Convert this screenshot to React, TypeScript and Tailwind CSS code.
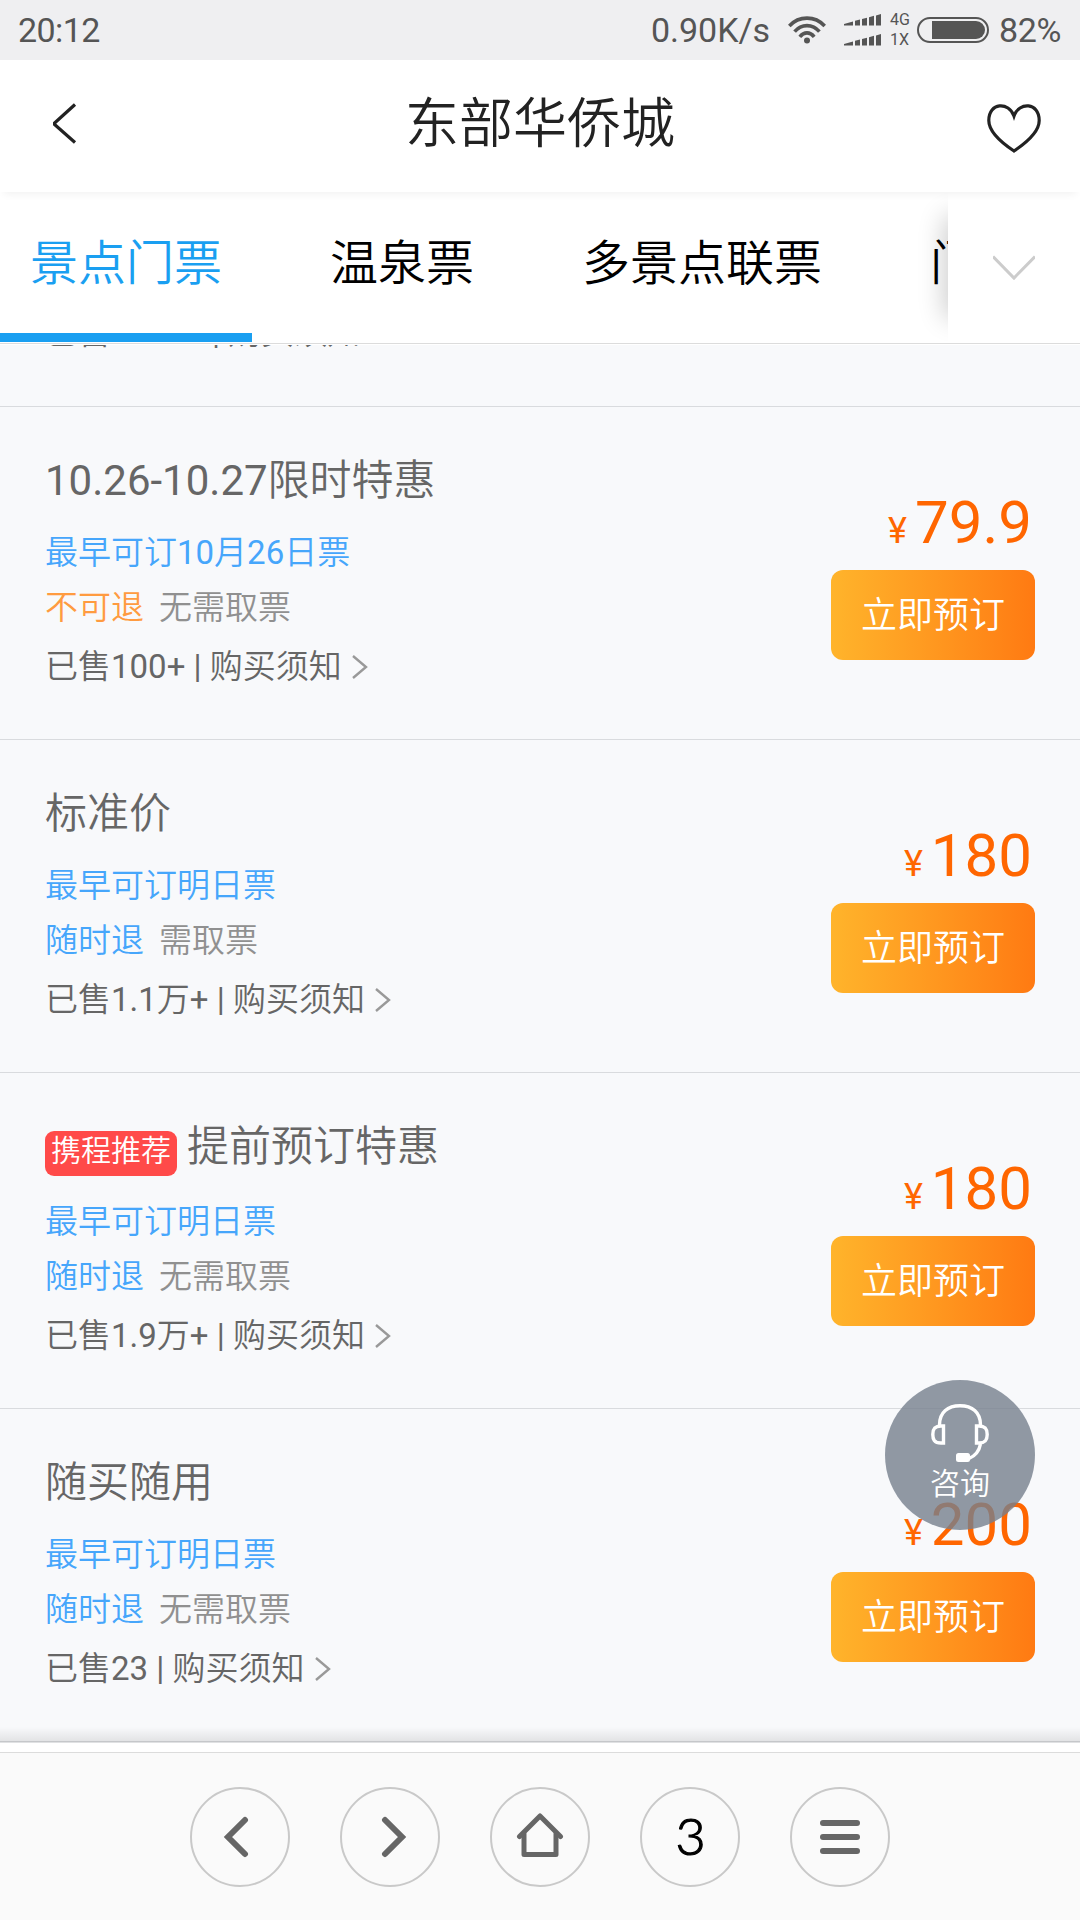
type Offer = {
  title: string;
  badge?: string;
  date: string;
  refund: string;
  refundable: boolean;
  pickup: string;
  sold: string;
  price: string;
};

const tabs = ['景点门票', '温泉票', '多景点联票', '门票'];

const offers: Offer[] = [
  {
    title: '10.26-10.27限时特惠',
    date: '最早可订10月26日票',
    refund: '不可退',
    refundable: false,
    pickup: '无需取票',
    sold: '100+',
    price: '79.9',
  },
  {
    title: '标准价',
    date: '最早可订明日票',
    refund: '随时退',
    refundable: true,
    pickup: '需取票',
    sold: '1.1万+',
    price: '180',
  },
  {
    title: '提前预订特惠',
    badge: '携程推荐',
    date: '最早可订明日票',
    refund: '随时退',
    refundable: true,
    pickup: '无需取票',
    sold: '1.9万+',
    price: '180',
  },
  {
    title: '随买随用',
    date: '最早可订明日票',
    refund: '随时退',
    refundable: true,
    pickup: '无需取票',
    sold: '23',
    price: '200',
  },
];

function SignalBars() {
  return (
    <svg width="38" height="12" viewBox="0 0 38 12" fill="#555">
      <path d="M0 10 L9 7.5 V11.5 H0Z M11 6.8 L16 5.5 V11.5 H11Z M18 5 L23 3.7 V11.5 H18Z M25 3.2 L30 1.8 V11.5 H25Z M32 1.4 L37 0 V11.5 H32Z" />
    </svg>
  );
}

function StatusBar() {
  return (
    <div className="flex h-[60px] shrink-0 items-center bg-[#efeff1] pr-[19px] pl-[18px] text-[34px] leading-[60px] text-[#555]">
      <span className="tracking-[-0.6px]">20:12</span>
      <span className="ml-auto">0.90K/s</span>
      <svg className="ml-[18px]" width="38" height="28" viewBox="0 0 38 28" fill="none" stroke="#555" strokeWidth="3.6">
        <path d="M1.3 10 C11 -0.5 27 -0.5 36.7 10" />
        <path d="M6.6 15.6 C13.5 7.6 24.5 7.6 31.4 15.6" />
        <path d="M11.8 20.8 C16 15.6 22 15.6 26.2 20.8" />
        <circle cx="19" cy="24.6" r="3" fill="#555" stroke="none" />
      </svg>
      <div className="ml-[18px] flex flex-col gap-2">
        <SignalBars />
        <SignalBars />
      </div>
      <div className="ml-2 w-[25px] text-[16px] leading-5">
        <div>4G</div>
        <div>1X</div>
      </div>
      <svg className="ml-[2px]" width="72" height="26" viewBox="0 0 72 26">
        <rect x="1" y="1" width="70" height="24" rx="12" fill="none" stroke="#555" strokeWidth="2" />
        <path d="M15 4 H59 A9 9 0 0 1 59 22 H15Z" fill="#555" />
      </svg>
      <span className="ml-[10px] tracking-[-0.4px]">82%</span>
    </div>
  );
}

function Header() {
  return (
    <header className="relative z-10 flex h-[132px] shrink-0 items-center bg-white px-[38px] shadow-[0_6px_8px_-4px_rgba(0,0,0,0.06)]">
      <svg className="-mt-1 ml-3" width="44" height="42" viewBox="0 0 44 42" fill="none" stroke="#222" strokeWidth="3.2">
        <path d="M25 1.5 L4.6 20 V21.5 L25 39.5" />
      </svg>
      <h1 className="-mt-[3px] flex-1 text-center text-[54px] leading-[60px] text-[#222]">东部华侨城</h1>
      <svg className="mt-1" width="56" height="50" viewBox="0 0 56 50" fill="none" stroke="#222" strokeWidth="3.2">
        <path d="M28 13 C23 -1.5 2.8 -1 2.8 17.5 C2.8 30 19 42 28 48 C37 42 53.2 30 53.2 17.5 C53.2 -1 33 -1.5 28 13Z" />
      </svg>
    </header>
  );
}

function TabBar() {
  return (
    <div className="flex h-[153px] shrink-0 border-b border-white bg-white">
      <div className="flex w-full overflow-hidden border-b border-[#dcdcdc]">
        <nav className="flex w-[948px] gap-12 overflow-hidden text-[48px] leading-[143px] whitespace-nowrap text-black">
          {tabs.map((tab, i) => (
            <div
              key={tab}
              className={
                i === 0
                  ? 'h-[150px] shrink-0 border-b-9 border-[#1a9ff1] px-[30px] text-[#1a9ff1]'
                  : 'h-[150px] shrink-0 px-[30px]'
              }
            >
              {tab}
            </div>
          ))}
        </nav>
        <div className="relative flex w-[132px] shrink-0 items-center justify-center">
          {/* soft edge over the scrolled tabs */}
          <div className="absolute top-0 right-full h-full w-8 overflow-hidden">
            <div className="absolute top-[28px] left-full h-[94px] w-8 shadow-[0_0_27px_4px_rgba(0,0,0,0.2)]" />
          </div>
          <svg width="42" height="26" viewBox="0 0 42 26" fill="none" stroke="#ccc" strokeWidth="3">
            <path d="M0 1.5 L21 23 L42 1.5" />
          </svg>
        </div>
      </div>
    </div>
  );
}

function SoldLine({ sold }: { sold: string }) {
  return (
    <div className="flex items-center text-[33px] leading-[54px] text-[#666]">
      <span>已售{sold} | 购买须知</span>
      <svg className="ml-[10px]" width="16" height="24" viewBox="0 0 16 24" fill="none" stroke="#999" strokeWidth="2.4">
        <path d="M1 1 L14 12 L1 23" />
      </svg>
    </div>
  );
}

function OfferRow({ offer }: { offer: Offer }) {
  return (
    <div className="flex shrink-0 justify-between border-b border-[#d9dbde] px-[45px]">
      <div className="pt-[44px] pb-[45px]">
        <div className="flex text-[42px] leading-[60px] text-[#666]">
          {offer.badge && (
            <span className="mt-[14px] mr-[10px] mb-1 h-[45px] rounded-[9px] bg-[#ff4a49] px-[6px] text-[30px] leading-[40px] text-white">
              {offer.badge}
            </span>
          )}
          <span>{offer.title}</span>
        </div>
        <div className="mt-[15px] text-[33px] leading-[54px] text-[#46a6fb]">{offer.date}</div>
        <div className="mt-px flex gap-[15px] text-[33px] leading-[54px]">
          <span className={offer.refundable ? 'text-[#46a6fb]' : 'text-[#ff9b40]'}>{offer.refund}</span>
          <span className="text-[#909090]">{offer.pickup}</span>
        </div>
        <div className="mt-[5px]">
          <SoldLine sold={offer.sold} />
        </div>
      </div>
      <div className="flex flex-col items-end pt-[86px]">
        <div className="flex h-[60px] items-baseline gap-2 pr-[3px] leading-[60px] text-[#ff6600]">
          <span className="text-[36px]">¥</span>
          <span className="text-[60px]">{offer.price}</span>
        </div>
        <button className="mt-[17px] h-[90px] w-[204px] rounded-xl bg-linear-to-r from-[#ffb42b] to-[#ff7a12] pt-[2px] text-[36px] text-white">
          立即预订
        </button>
      </div>
    </div>
  );
}

function ConsultButton() {
  return (
    <button className="absolute top-[1380px] left-[885px] flex h-[150px] w-[150px] flex-col items-center rounded-full bg-[#767f8d]/80 pt-[23px] text-white">
      <svg width="60" height="60" viewBox="0 0 60 60" fill="none" stroke="#fff" strokeWidth="3.4">
        <path d="M9.5 22 C9.5 9 18 2.8 30 2.8 C42 2.8 50.5 9 50.5 22" />
        <path d="M13.5 23 V40 H11 C4 40 2.8 36 2.8 31.5 C2.8 27 4 23 11 23Z" />
        <path d="M46.5 23 V40 H49 C56 40 57.2 36 57.2 31.5 C57.2 27 56 23 49 23Z" />
        <path d="M50.5 41 C49 49 45 53 39 55.5" />
        <rect x="26" y="50" width="14" height="9" rx="2.5" fill="#fff" stroke="none" />
      </svg>
      <span className="text-[30px] leading-[42px]">咨询</span>
    </button>
  );
}

const circle = 'flex size-[100px] items-center justify-center rounded-full border-2 border-[#c9c9c9]';

function BrowserBar() {
  return (
    <div className="flex h-[168px] shrink-0 justify-center gap-[50px] border-t border-[#dcdcdc] bg-[#fafafa] pt-[34px]">
      <div className={circle}>
        <svg className="-ml-2" width="26" height="42" viewBox="0 0 26 42" fill="none" stroke="#666" strokeWidth="6" strokeLinecap="round">
          <path d="M22 4 L5 21 L22 38" />
        </svg>
      </div>
      <div className={circle}>
        <svg className="ml-2" width="26" height="42" viewBox="0 0 26 42" fill="none" stroke="#666" strokeWidth="6" strokeLinecap="round">
          <path d="M4 4 L21 21 L4 38" />
        </svg>
      </div>
      <div className={circle}>
        <svg className="-mt-1" width="48" height="48" viewBox="0 0 48 48" fill="none" stroke="#666" strokeWidth="5" strokeLinecap="round" strokeLinejoin="round">
          <path d="M3.5 25.5 L24 5 L44.5 25.5" />
          <path d="M8 23 V43.5 H40 V23" />
        </svg>
      </div>
      <div className={circle}>
        <span className="-mt-[5px] ml-px font-['Lato'] text-[52px] leading-none font-light text-black [-webkit-text-stroke:1.2px_black]">
          3
        </span>
      </div>
      <div className={circle}>
        <div className="flex w-10 flex-col gap-2">
          <div className="h-[6px] rounded-full bg-[#666]" />
          <div className="h-[6px] rounded-full bg-[#666]" />
          <div className="h-[6px] rounded-full bg-[#666]" />
        </div>
      </div>
    </div>
  );
}

export default function App() {
  return (
    <div className="relative flex h-[1920px] w-[1080px] flex-col overflow-hidden bg-white font-['Roboto','Noto_Sans_CJK_SC_DemiLight','Noto_Sans_CJK_SC',sans-serif]">
      <StatusBar />
      <Header />
      <TabBar />

      {/* Offers */}
      <main className="relative flex h-[1398px] shrink-0 flex-col overflow-hidden bg-[#f8f9fb]">
        <div className="h-[62px] shrink-0 overflow-hidden border-b border-[#d9dbde] pl-[45px]">
          <div className="-mt-[39px]">
            <SoldLine sold="1000+" />
          </div>
        </div>
        {offers.map((offer) => (
          <OfferRow key={offer.title} offer={offer} />
        ))}
        <div className="absolute bottom-0 h-4 w-full bg-linear-to-b from-transparent to-black/10" />
      </main>
      <div className="h-[9px] shrink-0" />

      <BrowserBar />
      <ConsultButton />
    </div>
  );
}
